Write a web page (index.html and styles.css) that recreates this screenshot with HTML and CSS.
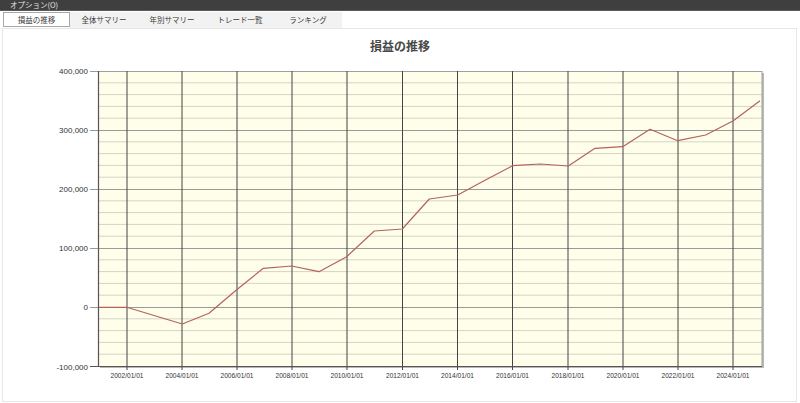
FILE: index.html
```html
<!DOCTYPE html>
<html lang="ja">
<head>
<meta charset="utf-8">
<link rel="stylesheet" href="styles.css">
</head>
<body>
<div class="menubar"><span class="menu-item">オプション(O)</span></div>
<div class="tabs">
  <div class="tab active">損益の推移</div>
  <div class="tab">全体サマリー</div>
  <div class="tab">年別サマリー</div>
  <div class="tab">トレード一覧</div>
  <div class="tab">ランキング</div>
</div>
<div class="panel">
<svg class="chart" width="793" height="372" viewBox="3 29 793 372" xmlns="http://www.w3.org/2000/svg">
  <text class="title" x="400" y="51" text-anchor="middle">損益の推移</text>
  <rect class="shadow" x="100" y="73" width="664" height="295"/>
  <rect class="plotbg" x="98" y="71" width="664" height="295"/>
  <g class="minor">
    <line x1="98" x2="762" y1="82.8" y2="82.8"/>
    <line x1="98" x2="762" y1="94.6" y2="94.6"/>
    <line x1="98" x2="762" y1="106.4" y2="106.4"/>
    <line x1="98" x2="762" y1="118.2" y2="118.2"/>
    <line x1="98" x2="762" y1="141.8" y2="141.8"/>
    <line x1="98" x2="762" y1="153.6" y2="153.6"/>
    <line x1="98" x2="762" y1="165.4" y2="165.4"/>
    <line x1="98" x2="762" y1="177.2" y2="177.2"/>
    <line x1="98" x2="762" y1="200.8" y2="200.8"/>
    <line x1="98" x2="762" y1="212.6" y2="212.6"/>
    <line x1="98" x2="762" y1="224.4" y2="224.4"/>
    <line x1="98" x2="762" y1="236.2" y2="236.2"/>
    <line x1="98" x2="762" y1="259.8" y2="259.8"/>
    <line x1="98" x2="762" y1="271.6" y2="271.6"/>
    <line x1="98" x2="762" y1="283.4" y2="283.4"/>
    <line x1="98" x2="762" y1="295.2" y2="295.2"/>
    <line x1="98" x2="762" y1="318.8" y2="318.8"/>
    <line x1="98" x2="762" y1="330.6" y2="330.6"/>
    <line x1="98" x2="762" y1="342.4" y2="342.4"/>
    <line x1="98" x2="762" y1="354.2" y2="354.2"/>
  </g>
  <g class="major">
    <line x1="90" x2="762" y1="71.5" y2="71.5"/>
    <line x1="90" x2="762" y1="130.5" y2="130.5"/>
    <line x1="90" x2="762" y1="189.5" y2="189.5"/>
    <line x1="90" x2="762" y1="248.5" y2="248.5"/>
    <line x1="90" x2="762" y1="307.5" y2="307.5"/>
  </g>
  <line class="topborder" x1="98" x2="762" y1="71.5" y2="71.5"/>
  <line class="rightborder" x1="762" x2="762" y1="71" y2="366"/>
  <g class="vgrid">
    <line x1="127" x2="127" y1="71" y2="370"/>
    <line x1="182" x2="182" y1="71" y2="370"/>
    <line x1="237" x2="237" y1="71" y2="370"/>
    <line x1="292" x2="292" y1="71" y2="370"/>
    <line x1="347" x2="347" y1="71" y2="370"/>
    <line x1="402.5" x2="402.5" y1="71" y2="370"/>
    <line x1="457.5" x2="457.5" y1="71" y2="370"/>
    <line x1="512.5" x2="512.5" y1="71" y2="370"/>
    <line x1="568" x2="568" y1="71" y2="370"/>
    <line x1="623" x2="623" y1="71" y2="370"/>
    <line x1="678" x2="678" y1="71" y2="370"/>
    <line x1="733" x2="733" y1="71" y2="370"/>
  </g>
  <g class="axis">
    <line x1="98.5" x2="98.5" y1="71" y2="367"/>
    <line x1="90" x2="762" y1="366.5" y2="366.5"/>
  </g>
  <polyline class="series" points="99,307.3 126.7,307.3 182.3,324 209,313.3 237.3,289.3 263.3,268.3 291.7,266 319,271.7 346.7,256.7 374.3,231 402.3,229 429.3,199 457.7,195 485,180.3 512.7,165.7 540,164 568.3,166 595,148.3 622.7,146.7 650,129.3 677.7,140.7 705.7,135 733.3,120.7 760,100.7"/>
  <g class="ylabels">
    <text x="88" y="74">400,000</text>
    <text x="88" y="133">300,000</text>
    <text x="88" y="192">200,000</text>
    <text x="88" y="251">100,000</text>
    <text x="88" y="310">0</text>
    <text x="88" y="369.5">-100,000</text>
  </g>
  <g class="xlabels">
    <text x="127" y="377.5" textLength="33" lengthAdjust="spacingAndGlyphs">2002/01/01</text>
    <text x="182" y="377.5" textLength="33" lengthAdjust="spacingAndGlyphs">2004/01/01</text>
    <text x="237" y="377.5" textLength="33" lengthAdjust="spacingAndGlyphs">2006/01/01</text>
    <text x="292" y="377.5" textLength="33" lengthAdjust="spacingAndGlyphs">2008/01/01</text>
    <text x="347" y="377.5" textLength="33" lengthAdjust="spacingAndGlyphs">2010/01/01</text>
    <text x="402.5" y="377.5" textLength="33" lengthAdjust="spacingAndGlyphs">2012/01/01</text>
    <text x="457.5" y="377.5" textLength="33" lengthAdjust="spacingAndGlyphs">2014/01/01</text>
    <text x="512.5" y="377.5" textLength="33" lengthAdjust="spacingAndGlyphs">2016/01/01</text>
    <text x="568" y="377.5" textLength="33" lengthAdjust="spacingAndGlyphs">2018/01/01</text>
    <text x="623" y="377.5" textLength="33" lengthAdjust="spacingAndGlyphs">2020/01/01</text>
    <text x="678" y="377.5" textLength="33" lengthAdjust="spacingAndGlyphs">2022/01/01</text>
    <text x="733" y="377.5" textLength="33" lengthAdjust="spacingAndGlyphs">2024/01/01</text>
  </g>
</svg>
</div>
</body>
</html>
```
FILE: styles.css
```css
html, body {
  margin: 0;
  padding: 0;
  background: #ffffff;
}
body {
  width: 800px;
  height: 403px;
  overflow: hidden;
  font-family: "Noto Sans CJK JP", "Liberation Sans", sans-serif;
}
.menubar {
  height: 11px;
  background: #3f3f3f;
  border-bottom: 1px solid #5a5a5a;
  box-sizing: border-box;
  display: flex;
  align-items: center;
  padding-left: 10px;
}
.menu-item {
  color: #e6e6e6;
  font-size: 7.5px;
  line-height: 10px;
}
.tabs {
  height: 17px;
  display: flex;
  align-items: flex-start;
  padding: 1px 0 0 3px;
  box-sizing: border-box;
}
.tab {
  width: 68px;
  height: 16px;
  box-sizing: border-box;
  background: #f2f2f2;
  border: 1px solid transparent;
  color: #3a3a3a;
  font-size: 7.5px;
  line-height: 14px;
  text-align: center;
}
.tab.active {
  width: 67px;
  height: 15px;
  background: #ffffff;
  border-color: #a8a8a8;
}
.panel {
  margin-left: 2px;
  width: 795px;
  height: 374px;
  box-sizing: border-box;
  border: 1px solid #e6e6e6;
  background: #ffffff;
}
.chart {
  display: block;
}
.title {
  font-family: "Noto Sans CJK JP", sans-serif;
  font-size: 12px;
  font-weight: bold;
  fill: #484848;
}
.shadow {
  fill: #b8b8b8;
}
.plotbg {
  fill: #fefeeb;
}
.minor line {
  stroke: #d4d4c6;
  stroke-width: 1;
}
.major line {
  stroke: #9a9a9a;
  stroke-width: 1;
}
.topborder {
  stroke: #a0a0a0;
  stroke-width: 1;
}
.rightborder {
  stroke: #a0a0a0;
  stroke-width: 1;
}
.vgrid line {
  stroke: #454545;
  stroke-width: 1;
}
.axis line {
  stroke: #555555;
  stroke-width: 1.2;
}
.series {
  fill: none;
  stroke: #b5625f;
  stroke-width: 1.2;
  stroke-linejoin: round;
}
.ylabels text {
  font-family: "Liberation Sans", sans-serif;
  font-size: 8px;
  fill: #333333;
  text-anchor: end;
}
.xlabels text {
  font-family: "Liberation Sans", sans-serif;
  font-size: 8px;
  fill: #333333;
  text-anchor: middle;
}
```
